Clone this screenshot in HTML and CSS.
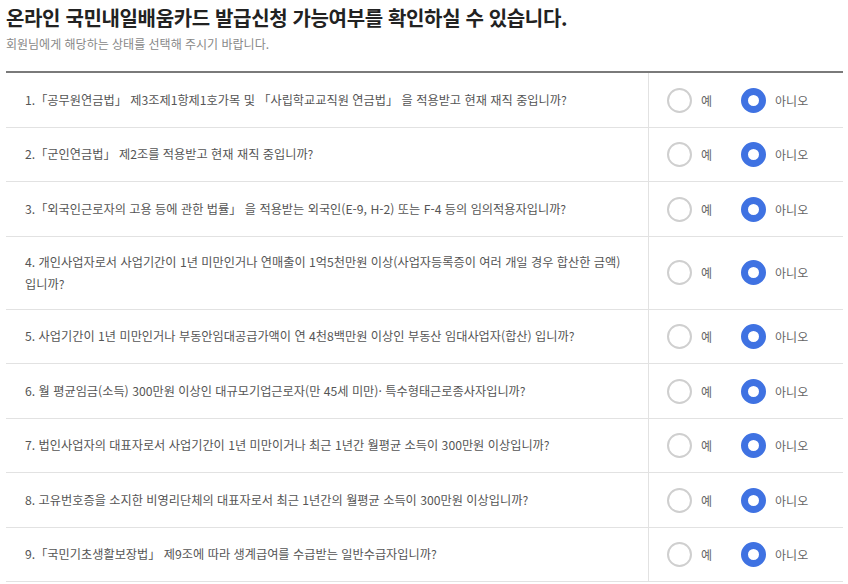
FILE: index.html
```html
<!DOCTYPE html>
<html lang="ko">
<head>
  <meta charset="UTF-8" />
  <meta name="viewport" content="width=device-width, initial-scale=1.0" />
  <title>국민내일배움카드 발급신청 가능여부</title>
  <link rel="stylesheet" href="styles.css">
</head>
<body>
  <!-- 안내 문구 -->
  <div class="cabecalho">
    <h2>온라인 국민내일배움카드 발급신청 가능여부를 확인하실 수 있습니다.</h2>
    <p>회원님에게 해당하는 상태를 선택해 주시기 바랍니다.</p>
  </div>

  <!-- 질문 목록 -->
  <div class="lista">
    <div class="linha">
      <div class="pergunta">1.「공무원연금법」 제3조제1항제1호가목 및 「사립학교교직원 연금법」 을 적용받고 현재 재직 중입니까?</div>
      <div class="opcoes">
        <label class="opcao"><input type="radio" name="q1" value="Y">예</label>
        <label class="opcao"><input type="radio" name="q1" value="N" checked>아니오</label>
      </div>
    </div>
    <div class="linha">
      <div class="pergunta">2.「군인연금법」 제2조를 적용받고 현재 재직 중입니까?</div>
      <div class="opcoes">
        <label class="opcao"><input type="radio" name="q2" value="Y">예</label>
        <label class="opcao"><input type="radio" name="q2" value="N" checked>아니오</label>
      </div>
    </div>
    <div class="linha">
      <div class="pergunta">3.「외국인근로자의 고용 등에 관한 법률」 을 적용받는 외국인(E-9, H-2) 또는 F-4 등의 임의적용자입니까?</div>
      <div class="opcoes">
        <label class="opcao"><input type="radio" name="q3" value="Y">예</label>
        <label class="opcao"><input type="radio" name="q3" value="N" checked>아니오</label>
      </div>
    </div>
    <div class="linha">
      <div class="pergunta">4. 개인사업자로서 사업기간이 1년 미만인거나 연매출이 1억5천만원 이상(사업자등록증이 여러 개일 경우 합산한 금액) 입니까?</div>
      <div class="opcoes">
        <label class="opcao"><input type="radio" name="q4" value="Y">예</label>
        <label class="opcao"><input type="radio" name="q4" value="N" checked>아니오</label>
      </div>
    </div>
    <div class="linha">
      <div class="pergunta">5. 사업기간이 1년 미만인거나 부동안임대공급가액이 연 4천8백만원 이상인 부동산 임대사업자(합산) 입니까?</div>
      <div class="opcoes">
        <label class="opcao"><input type="radio" name="q5" value="Y">예</label>
        <label class="opcao"><input type="radio" name="q5" value="N" checked>아니오</label>
      </div>
    </div>
    <div class="linha">
      <div class="pergunta">6. 월 평균임금(소득) 300만원 이상인 대규모기업근로자(만 45세 미만)· 특수형태근로종사자입니까?</div>
      <div class="opcoes">
        <label class="opcao"><input type="radio" name="q6" value="Y">예</label>
        <label class="opcao"><input type="radio" name="q6" value="N" checked>아니오</label>
      </div>
    </div>
    <div class="linha">
      <div class="pergunta">7. 법인사업자의 대표자로서 사업기간이 1년 미만이거나 최근 1년간 월평균 소득이 300만원 이상입니까?</div>
      <div class="opcoes">
        <label class="opcao"><input type="radio" name="q7" value="Y">예</label>
        <label class="opcao"><input type="radio" name="q7" value="N" checked>아니오</label>
      </div>
    </div>
    <div class="linha">
      <div class="pergunta">8. 고유번호증을 소지한 비영리단체의 대표자로서 최근 1년간의 월평균 소득이 300만원 이상입니까?</div>
      <div class="opcoes">
        <label class="opcao"><input type="radio" name="q8" value="Y">예</label>
        <label class="opcao"><input type="radio" name="q8" value="N" checked>아니오</label>
      </div>
    </div>
    <div class="linha">
      <div class="pergunta">9.「국민기초생활보장법」 제9조에 따라 생계급여를 수급받는 일반수급자입니까?</div>
      <div class="opcoes">
        <label class="opcao"><input type="radio" name="q9" value="Y">예</label>
        <label class="opcao"><input type="radio" name="q9" value="N" checked>아니오</label>
      </div>
    </div>
  </div>
</body>
</html>
```

FILE: styles.css
```css
/* Estilos gerais */
body {
  font-family: "Noto Sans CJK KR", "Noto Sans", sans-serif;
  background: #fff;
  color: #555;
  margin: 0;
  padding: 0 5px 0 6px;
}

/* Cabeçalho */
.cabecalho h2 {
  margin: 5px 0 0;
  font-size: 20px;
  line-height: 26px;
  font-weight: bold;
  color: #222;
  letter-spacing: -0.35px;
}

.cabecalho p {
  margin: 4px 0 18px;
  font-size: 12px;
  line-height: 18px;
  color: #888;
}

/* Lista de perguntas */
.lista {
  border-top: 2px solid #7a7a7a;
}

.linha {
  display: grid;
  grid-template-columns: 1fr 195px;
  border-bottom: 1px solid #e2e2e2;
}

.pergunta {
  padding: 14px 18px 14px 19px;
  font-size: 12.2px;
  line-height: 22px;
  color: #555;
  word-break: keep-all;
  align-self: center;
}

.opcoes {
  border-left: 1px solid #e2e2e2;
  padding: 14.5px 0 14px 18px;
  display: flex;
  align-items: center;
  gap: 29px;
}

.opcao {
  display: flex;
  align-items: center;
  gap: 9px;
  font-size: 12px;
  color: #666;
  cursor: pointer;
}

/* Botões de rádio */
.opcao input {
  appearance: none;
  -webkit-appearance: none;
  margin: 0;
  width: 25px;
  height: 25px;
  border-radius: 50%;
  border: 2px solid #cfcfcf;
  background: #fff;
  box-sizing: border-box;
  cursor: pointer;
}

.opcao input:checked {
  border: 7px solid #3f72e2;
}
```
